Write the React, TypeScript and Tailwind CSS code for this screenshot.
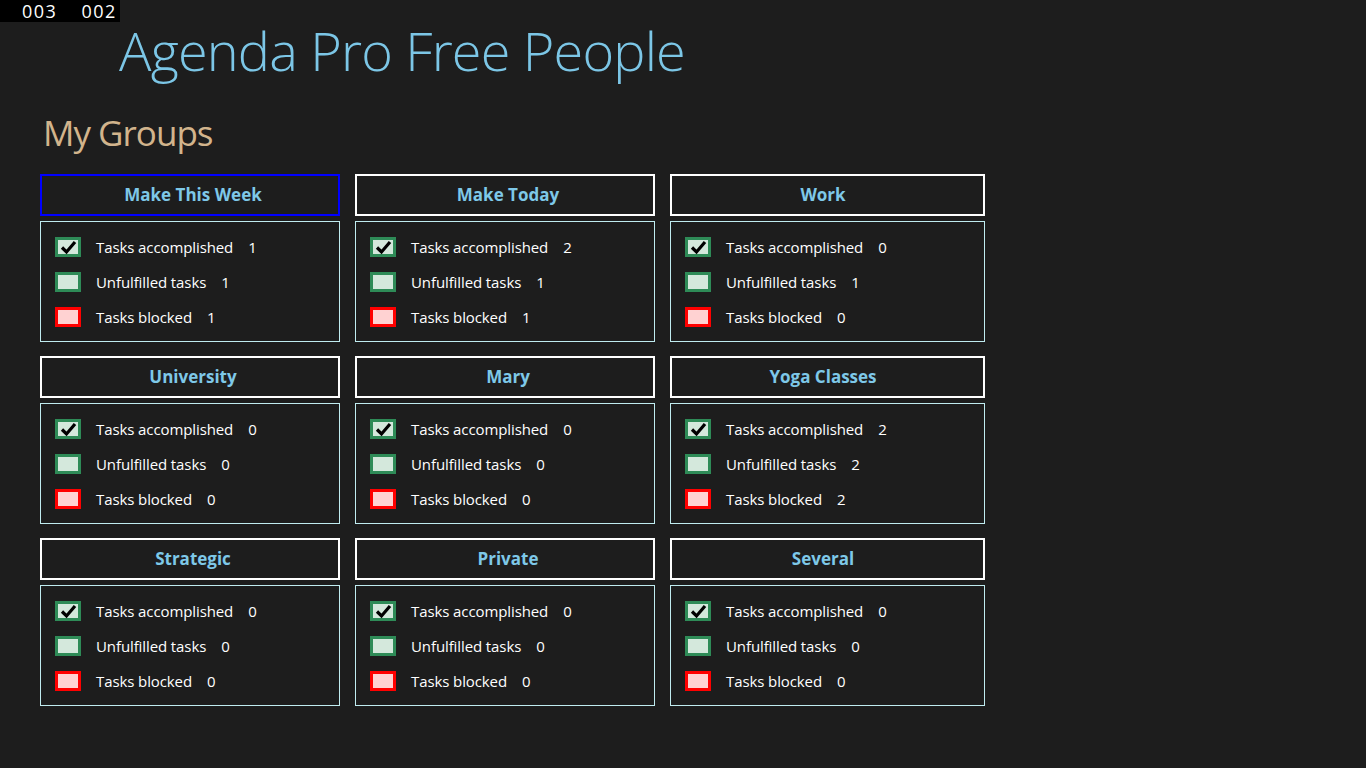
import React from 'react';

type Group = {
  name: string;
  done: number;
  open: number;
  blocked: number;
  active?: boolean;
};

const groups: Group[] = [
  { name: 'Make This Week', done: 1, open: 1, blocked: 1, active: true },
  { name: 'Make Today', done: 2, open: 1, blocked: 1 },
  { name: 'Work', done: 0, open: 1, blocked: 0 },
  { name: 'University', done: 0, open: 0, blocked: 0 },
  { name: 'Mary', done: 0, open: 0, blocked: 0 },
  { name: 'Yoga Classes', done: 2, open: 2, blocked: 2 },
  { name: 'Strategic', done: 0, open: 0, blocked: 0 },
  { name: 'Private', done: 0, open: 0, blocked: 0 },
  { name: 'Several', done: 0, open: 0, blocked: 0 },
];

function StatusBox({ kind }: { kind: 'done' | 'open' | 'blocked' }) {
  const colors =
    kind === 'blocked'
      ? 'border-[#ff0000] bg-[#ffd2d2]'
      : 'border-[#2e8b57] bg-[#d4e8dc]';
  return (
    <div className={`relative w-[26px] h-[20px] border-[3px] shrink-0 ${colors}`}>
      {kind === 'done' && (
        <svg
          viewBox="0 0 26 20"
          className="absolute -left-[3px] -top-[3px] w-[26px] h-[20px]"
        >
          <polyline
            points="7,10.5 11.5,15 20,5"
            fill="none"
            stroke="#000"
            strokeWidth="3.2"
          />
        </svg>
      )}
    </div>
  );
}

function StatRow({
  kind,
  label,
  value,
}: {
  kind: 'done' | 'open' | 'blocked';
  label: string;
  value: number;
}) {
  return (
    <div className="flex items-center h-[20px]">
      <StatusBox kind={kind} />
      <span className="ml-[15px] text-white text-[15px] leading-[20px] -mt-[1px] tracking-[-0.1px]">
        {label}
      </span>
      <span className="ml-[15px] text-white text-[15px] leading-[20px] -mt-[1px]">{value}</span>
    </div>
  );
}

function GroupCard({ group }: { group: Group }) {
  return (
    <div className="flex flex-col">
      {/* header */}
      <div
        className={`h-[42px] border-2 flex items-center ${
          group.active ? 'border-[#0000ff]' : 'border-white'
        }`}
      >
        <div className="w-[302px] shrink-0 flex justify-center">
          <span className="text-[#7ec8e8] text-[17px] font-bold">{group.name}</span>
        </div>
      </div>

      {/* stats */}
      <div className="mt-[5px] h-[121px] border border-[#c0ecf0] pl-[14px] pt-[15px] flex flex-col gap-[15px]">
        <StatRow kind="done" label="Tasks accomplished" value={group.done} />
        <StatRow kind="open" label="Unfulfilled tasks" value={group.open} />
        <StatRow kind="blocked" label="Tasks blocked" value={group.blocked} />
      </div>
    </div>
  );
}

export default function App() {
  return (
    <div
      className="relative min-h-[768px] bg-[#1d1d1d]"
      style={{ fontFamily: '"Open Sans", "Noto Sans", sans-serif' }}
    >
      {/* frame counter overlay */}
      <div className="absolute left-0 top-0 w-[120px] h-[22px] bg-black text-white text-[18px] leading-[22px] tracking-[1.5px] flex">
        <span className="ml-[22px]">003</span>
        <span className="ml-[24px]">002</span>
      </div>

      <div className="pt-[15px] pl-[119px]">
        <h1 className="text-[#7cc6e6] text-[54px] font-light leading-[70px] tracking-[-0.8px]">
          Agenda Pro Free People
        </h1>
      </div>

      <div className="pl-[43px] mt-[26px]">
        <h2 className="text-[#d2b48c] text-[35px] leading-[44px] tracking-[-1px]">My Groups</h2>
      </div>

      <div className="ml-[40px] mt-[19px] grid grid-cols-[300px_300px_315px] gap-x-[15px] gap-y-[14px]">
        {groups.map((g) => (
          <GroupCard key={g.name} group={g} />
        ))}
      </div>
    </div>
  );
}
